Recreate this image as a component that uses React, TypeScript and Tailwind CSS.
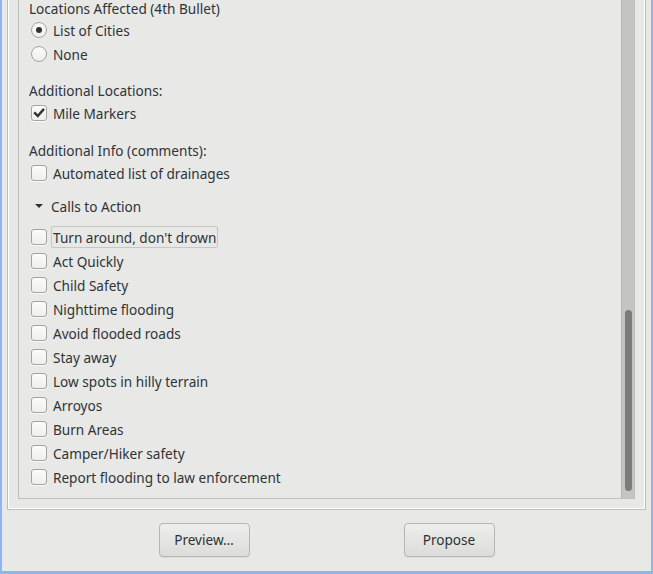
import React from "react";

const FONT = { fontFamily: '"Noto Sans", "DejaVu Sans", sans-serif' };

function Check({ checked = false }: { checked?: boolean }) {
  return (
    <div className="w-[16px] h-[16px] shrink-0 rounded-[3px] border border-[#a4a4a1] bg-gradient-to-b from-[#fbfbfa] to-[#efefed] shadow-[0_1px_0_rgba(255,255,255,0.8)] flex items-center justify-center">
      {checked && (
        <svg width="12" height="12" viewBox="0 0 12 12">
          <path d="M2 6.2 L4.8 9 L10.2 2.8" fill="none" stroke="#2e3436" strokeWidth="2.4" strokeLinecap="square" strokeLinejoin="miter" />
        </svg>
      )}
    </div>
  );
}

function Radio({ checked = false }: { checked?: boolean }) {
  return (
    <div className="w-[16px] h-[16px] shrink-0 rounded-full border border-[#a4a4a1] bg-gradient-to-b from-[#fbfbfa] to-[#efefed] flex items-center justify-center">
      {checked && <div className="w-[6px] h-[6px] rounded-full bg-[#2e3436]" />}
    </div>
  );
}

function Row({ children, control, focus = false }: { children: React.ReactNode; control: React.ReactNode; focus?: boolean }) {
  return (
    <div className="h-[24px] flex items-center pl-[2px] gap-[4px]">
      {control}
      <span
        className={
          "h-[22px] leading-[21px] px-[1px] border rounded-[2px] whitespace-nowrap " +
          (focus ? "border-[#c6c6c3]" : "border-transparent")
        }
      >
        {children}
      </span>
    </div>
  );
}

const calls = [
  "Turn around, don't drown",
  "Act Quickly",
  "Child Safety",
  "Nighttime flooding",
  "Avoid flooded roads",
  "Stay away",
  "Low spots in hilly terrain",
  "Arroyos",
  "Burn Areas",
  "Camper/Hiker safety",
  "Report flooding to law enforcement",
];

export default function App() {
  return (
    <div
      style={FONT}
      className="w-[653px] h-[574px] overflow-hidden bg-[#e8e8e7] border-l-2 border-r-2 border-b-[3px] border-[#8fb4ef] flex flex-col text-[13.6px] text-[#2e3436]"
    >
      {/* frame */}
      <div className="h-[510px] mx-[5px] border-x border-b border-[#bcbcb9] shadow-[inset_1px_0_0_#ffffff,inset_-1px_-1px_0_#ffffff] pl-[10px] pr-[10px] pb-[10px] flex">
        {/* scrolled window */}
        <div className="flex-1 border-x border-b border-[#c0c0bd] flex overflow-hidden">
          <div className="flex-1 pl-[10px] flex flex-col">
            <div className="h-[18px] leading-[17px] whitespace-nowrap">Locations Affected (4th Bullet)</div>
            <Row control={<Radio checked />}>List of Cities</Row>
            <Row control={<Radio />}>None</Row>

            <div className="mt-[13px] h-[22px] leading-[24px] whitespace-nowrap">Additional Locations:</div>
            <Row control={<Check checked />}>Mile Markers</Row>

            <div className="mt-[14px] h-[22px] leading-[24px] whitespace-nowrap">Additional Info (comments):</div>
            <Row control={<Check />}>Automated list of drainages</Row>

            <div className="mt-[9px] h-[24px] flex items-center pl-[2px] gap-[4px]">
              <div className="w-[16px] h-[16px] flex items-center justify-center">
                <svg width="10" height="6" viewBox="0 0 10 6">
                  <path d="M1 1 L9 1 L5 5 Z" fill="#2e3436" />
                </svg>
              </div>
              <span className="leading-[25px] whitespace-nowrap">Calls to Action</span>
            </div>

            <div className="mt-[7px] flex flex-col">
              {calls.map((c, i) => (
                <Row key={c} control={<Check />} focus={i === 0}>
                  {c}
                </Row>
              ))}
            </div>
          </div>
          {/* scrollbar */}
          <div className="w-[13px] shrink-0 border-l border-[#b4b5b3] bg-[#c4c5c3] flex flex-col justify-end pb-[7px]">
            <div className="h-[181px] w-[7px] mx-auto rounded-full bg-[#7c7d7b]" />
          </div>
        </div>
      </div>

      {/* buttons */}
      <div className="flex-1 flex justify-center items-start pt-[13px] gap-[154px]">
        <button className="w-[91px] h-[34px] rounded-[4px] border border-[#b5b5b2] bg-gradient-to-b from-[#eeeeec] to-[#dcdcd9] shadow-[0_1px_0_rgba(0,0,0,0.05)] text-[13.6px] text-[#2e3436]">
          Preview…
        </button>
        <button className="w-[91px] h-[34px] rounded-[4px] border border-[#b5b5b2] bg-gradient-to-b from-[#eeeeec] to-[#dcdcd9] shadow-[0_1px_0_rgba(0,0,0,0.05)] text-[13.6px] text-[#2e3436]">
          Propose
        </button>
      </div>
    </div>
  );
}
